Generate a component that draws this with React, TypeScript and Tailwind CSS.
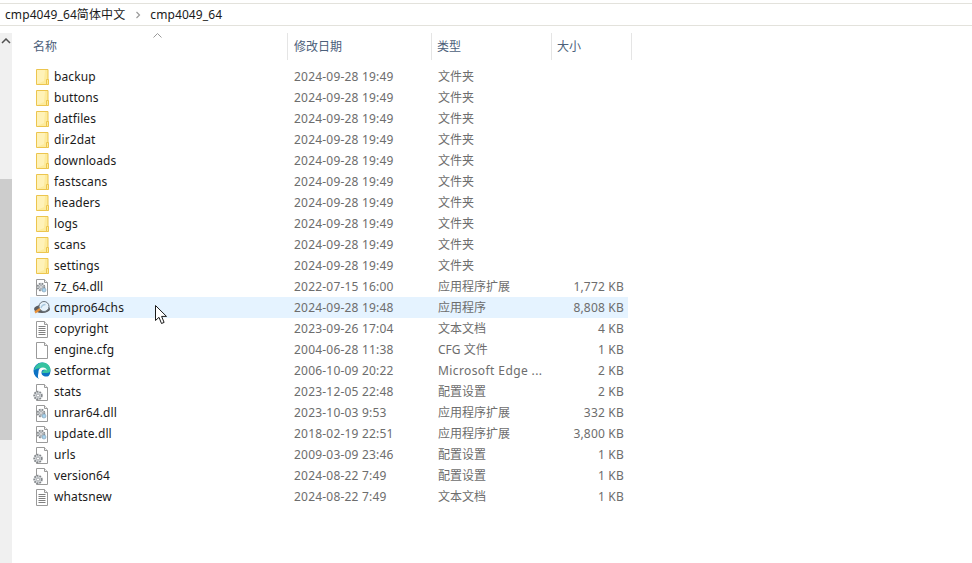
const FONT = "font-['Noto_Sans','Noto_Sans_CJK_SC',sans-serif]"

type Kind = 'folder' | 'dll' | 'app' | 'txt' | 'blank' | 'edge' | 'ini'

type Row = {
  name: string
  date: string
  type: string
  size?: string
  kind: Kind
}

const folder = (name: string): Row => ({
  name,
  date: '2024-09-28 19:49',
  type: '文件夹',
  kind: 'folder',
})

const ROWS: Row[] = [
  folder('backup'),
  folder('buttons'),
  folder('datfiles'),
  folder('dir2dat'),
  folder('downloads'),
  folder('fastscans'),
  folder('headers'),
  folder('logs'),
  folder('scans'),
  folder('settings'),
  { name: '7z_64.dll', date: '2022-07-15 16:00', type: '应用程序扩展', size: '1,772 KB', kind: 'dll' },
  { name: 'cmpro64chs', date: '2024-09-28 19:48', type: '应用程序', size: '8,808 KB', kind: 'app' },
  { name: 'copyright', date: '2023-09-26 17:04', type: '文本文档', size: '4 KB', kind: 'txt' },
  { name: 'engine.cfg', date: '2004-06-28 11:38', type: 'CFG 文件', size: '1 KB', kind: 'blank' },
  { name: 'setformat', date: '2006-10-09 20:22', type: 'Microsoft Edge ...', size: '2 KB', kind: 'edge' },
  { name: 'stats', date: '2023-12-05 22:48', type: '配置设置', size: '2 KB', kind: 'ini' },
  { name: 'unrar64.dll', date: '2023-10-03 9:53', type: '应用程序扩展', size: '332 KB', kind: 'dll' },
  { name: 'update.dll', date: '2018-02-19 22:51', type: '应用程序扩展', size: '3,800 KB', kind: 'dll' },
  { name: 'urls', date: '2009-03-09 23:46', type: '配置设置', size: '1 KB', kind: 'ini' },
  { name: 'version64', date: '2024-08-22 7:49', type: '配置设置', size: '1 KB', kind: 'ini' },
  { name: 'whatsnew', date: '2024-08-22 7:49', type: '文本文档', size: '1 KB', kind: 'txt' },
]

function Page({ children }: { children?: React.ReactNode }) {
  return (
    <>
      <path d="M3.500 1.500h8l3 3v13h-11z" fill="#fff" stroke="#9a9a9a" />
      <path d="M11.500 1.500v3h3" fill="#f2f2f2" stroke="#9a9a9a" />
      {children}
    </>
  )
}

function Gear({ x, y, r = 3.400 }: { x: number; y: number; r?: number }) {
  return (
    <g transform={`translate(${x} ${y})`}>
      <circle r={r} fill="#d5d9dc" stroke="#85898d" strokeWidth="1.800" strokeDasharray="1.700 1" />
      <circle r={r * 0.4} fill="#fff" stroke="#8a8e92" strokeWidth="0.700" />
    </g>
  )
}

function FileIcon({ kind }: { kind: Kind }) {
  if (kind === 'folder') {
    return (
      <svg width="18" height="18" viewBox="0 0 18 18">
        <path d="M3.500 1.500h11.500v15h-11.500z" fill="#fdeb9c" stroke="#ecc54e" />
        <path d="M4 2h8l-1 11-7 3z" fill="#fff2b8" />
        <path d="M13.500 11.500h2v5h-2z" fill="#fdeb9c" stroke="#ecc54e" />
      </svg>
    )
  }
  if (kind === 'edge') {
    return (
      <svg width="18" height="18" viewBox="0 0 18 18">
        <circle cx="9" cy="9" r="8.500" fill="#0c72c4" />
        <path d="M1 8.500C2 3.500 5.500.5 9.500.5c4.500 0 8 3.500 8 7.500 0 2-1.500 3-3.500 3H9c.2-2 1.800-2.800 2.500-3-1-2-7-3-10.500.5z" fill="#36c3a0" />
        <path d="M5.500 9.500c0-2.500 2-4 4.500-4 2 0 3.500 1.200 4 3-1.500-1.500-5-1.500-5.500 1.500-.5 3 2.500 5 5.500 4.500 1 0 1.800-.3 2.500-.8-1.500 2.500-4 4.300-7 4.300-2 0-3.500-.9-3.500-.9C4 15 5.500 12 5.500 9.500z" fill="#fff" />
      </svg>
    )
  }
  if (kind === 'app') {
    return (
      <svg width="20" height="18" viewBox="0 0 20 18">
        <ellipse cx="10" cy="10" rx="8" ry="4" fill="#5a5d61" />
        <circle cx="12" cy="7.500" r="5" fill="#e6f2fb" stroke="#6a747d" />
        <path d="M9 9c.6-2.200 2.200-3.500 4.500-3.500" fill="none" stroke="#a9c8de" strokeWidth="1.300" />
        <path d="M3 13.500l5-3.500" stroke="#e8923a" strokeWidth="2.200" />
      </svg>
    )
  }
  if (kind === 'txt') {
    return (
      <svg width="18" height="18" viewBox="0 0 18 18">
        <Page>
          <path d="M5.500 6.500h7M5.500 8.500h7M5.500 10.500h7M5.500 12.500h7M5.500 14.500h7" stroke="#808080" />
        </Page>
      </svg>
    )
  }
  if (kind === 'blank') {
    return (
      <svg width="18" height="18" viewBox="0 0 18 18">
        <Page />
      </svg>
    )
  }
  if (kind === 'dll') {
    return (
      <svg width="18" height="18" viewBox="0 0 18 18">
        <Page>
          <Gear x={8} y={9} />
          <circle cx="11" cy="12" r="2" fill="#a9d3ee" stroke="#8aa8bd" strokeWidth="0.700" />
        </Page>
      </svg>
    )
  }
  return (
    <svg width="18" height="18" viewBox="0 0 18 18">
      <Page />
      <Gear x={5} y={12.500} r={3.800} />
    </svg>
  )
}

function Cursor() {
  return (
    <svg
      className="absolute left-[155px] top-[305px]"
      width="13"
      height="20"
      viewBox="0 0 13 20"
    >
      <path
        d="M.5.500v15l3.500-3.200 2.500 6.200 2.600-1.100-2.500-6h4.900z"
        fill="#fff"
        stroke="#1a1a1a"
      />
    </svg>
  )
}

function HeaderCell({ label, width }: { label: string; width: string }) {
  return (
    <div className={`${width} h-[27px] flex items-center border-r border-[#e5e5e5] text-[#4c607a]`}>
      {label}
    </div>
  )
}

export default function App() {
  return (
    <div className={`${FONT} relative h-[563px] w-[972px] overflow-hidden bg-white text-[12px] leading-[21px]`}>
      <div className="mt-[3px] h-[23px] flex items-center pl-[5px] border-y border-[#e3e2dc] text-[#1a1a1a]">
        <span className="tracking-[0.1px]">cmp4049_64简体中文</span>
        <svg className="ml-[10px]" width="6" height="8" viewBox="0 0 6 8">
          <path d="M1.500 1l3 3-3 3" fill="none" stroke="#9a9a9a" strokeWidth="1.200" />
        </svg>
        <span className="ml-[9px] tracking-[0.1px]">cmp4049_64</span>
      </div>

      <div className="flex h-[537px]">
        <div className="w-3 mt-[7px] bg-[#f0f0f0] flex flex-col">
          <svg className="mt-[5px] ml-px" width="10" height="6" viewBox="0 0 10 6">
            <path d="M1 5l4-4 4 4" fill="none" stroke="#505050" strokeWidth="1.500" />
          </svg>
          <div className="mt-[135px] h-[261px] bg-[#cdcdcd]" />
        </div>

        <div className="relative flex-1 pl-[18px]">
          <svg className="absolute left-[141px] top-[7px]" width="9" height="5" viewBox="0 0 9 5">
            <path d="M.5 4.500l4-4 4 4" fill="none" stroke="#9a9a9a" />
          </svg>
          <div className="mt-[7px] flex">
            <HeaderCell label="名称" width="w-[258px] pl-[3px]" />
            <HeaderCell label="修改日期" width="w-[144px] pl-[6px]" />
            <HeaderCell label="类型" width="w-[120px] pl-[5px]" />
            <HeaderCell label="大小" width="w-[80px] pl-[5px]" />
          </div>

          <div className="mt-[6px] w-[598px] flex flex-col">
            {ROWS.map((r) => (
              <div
                key={r.name}
                className={`h-[21px] flex items-center ${r.kind === 'app' ? 'bg-[#e5f3ff]' : ''}`}
              >
                <div className="w-[24px] h-[18px] flex items-center justify-center shrink-0">
                  <FileIcon kind={r.kind} />
                </div>
                <div className="w-[240px] text-[#1a1a1a] tracking-[0.1px]">{r.name}</div>
                <div className="w-[144px] text-[#6d6d6d] tracking-[0.2px] whitespace-nowrap">{r.date}</div>
                <div className={`w-[112px] text-[#6d6d6d] whitespace-nowrap ${r.kind === 'edge' ? 'tracking-[0.4px]' : ''}`}>
                  {r.type}
                </div>
                <div className="flex-1 pr-[4px] text-right text-[#6d6d6d] tracking-[0.2px]">{r.size}</div>
              </div>
            ))}
          </div>
        </div>
      </div>

      <Cursor />
    </div>
  )
}
